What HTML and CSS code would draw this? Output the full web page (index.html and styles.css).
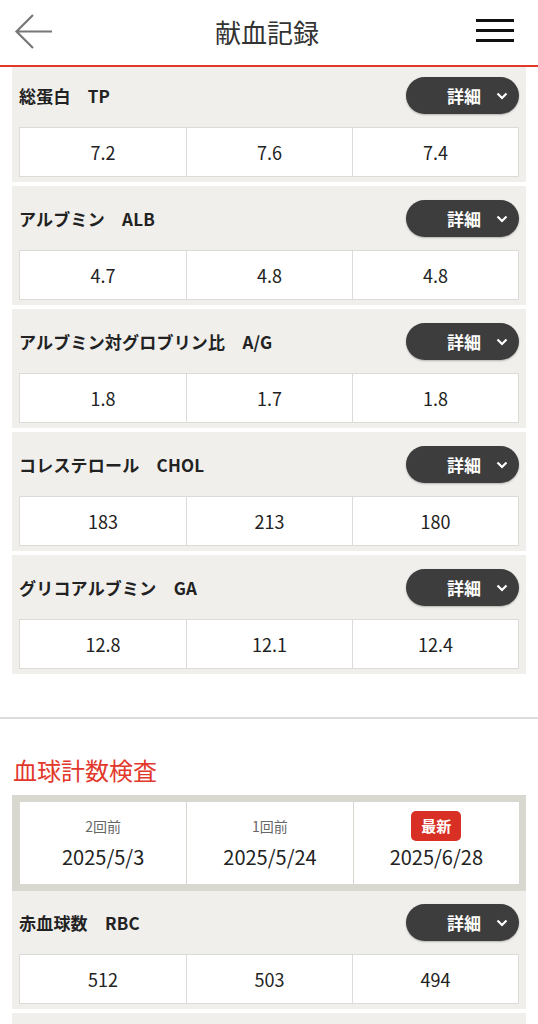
FILE: index.html
```html
<!DOCTYPE html>
<html lang="ja">
<head>
<meta charset="utf-8">
<title>献血記録</title>
<link rel="stylesheet" href="styles.css">
</head>
<body>
<header class="topbar">
  <button class="icon-btn back" aria-label="戻る">
    <svg width="40" height="38" viewBox="0 0 40 38"><path d="M38 18.5H2.5M19 2L2.5 18.5L19 35" fill="none" stroke="#777" stroke-width="2.2"/></svg>
  </button>
  <h1 class="title">献血記録</h1>
  <button class="icon-btn menu" aria-label="メニュー">
    <svg width="40" height="26" viewBox="0 0 40 26"><path d="M1 2.5H39M1 12.5H39M1 22.5H39" stroke="#111" stroke-width="3"/></svg>
  </button>
</header>

<main class="content">
  <section class="card">
    <div class="card-head"><span class="label">総蛋白　TP</span><button class="detail">詳細<svg class="chev" viewBox="0 0 12 8"><path d="M1.5 1.5L6 6L10.5 1.5" fill="none" stroke="#fff" stroke-width="2.2"/></svg></button></div>
    <div class="values"><div>7.2</div><div>7.6</div><div>7.4</div></div>
  </section>
  <section class="card">
    <div class="card-head"><span class="label">アルブミン　ALB</span><button class="detail">詳細<svg class="chev" viewBox="0 0 12 8"><path d="M1.5 1.5L6 6L10.5 1.5" fill="none" stroke="#fff" stroke-width="2.2"/></svg></button></div>
    <div class="values"><div>4.7</div><div>4.8</div><div>4.8</div></div>
  </section>
  <section class="card">
    <div class="card-head"><span class="label">アルブミン対グロブリン比　A/G</span><button class="detail">詳細<svg class="chev" viewBox="0 0 12 8"><path d="M1.5 1.5L6 6L10.5 1.5" fill="none" stroke="#fff" stroke-width="2.2"/></svg></button></div>
    <div class="values"><div>1.8</div><div>1.7</div><div>1.8</div></div>
  </section>
  <section class="card">
    <div class="card-head"><span class="label">コレステロール　CHOL</span><button class="detail">詳細<svg class="chev" viewBox="0 0 12 8"><path d="M1.5 1.5L6 6L10.5 1.5" fill="none" stroke="#fff" stroke-width="2.2"/></svg></button></div>
    <div class="values"><div>183</div><div>213</div><div>180</div></div>
  </section>
  <section class="card">
    <div class="card-head"><span class="label">グリコアルブミン　GA</span><button class="detail">詳細<svg class="chev" viewBox="0 0 12 8"><path d="M1.5 1.5L6 6L10.5 1.5" fill="none" stroke="#fff" stroke-width="2.2"/></svg></button></div>
    <div class="values"><div>12.8</div><div>12.1</div><div>12.4</div></div>
  </section>

  <hr class="divider">

  <h2 class="section-title">血球計数検査</h2>

  <div class="dates">
    <div class="date-cell"><span class="ago">2回前</span><span class="date">2025/5/3</span></div>
    <div class="date-cell"><span class="ago">1回前</span><span class="date">2025/5/24</span></div>
    <div class="date-cell"><span class="badge">最新</span><span class="date">2025/6/28</span></div>
  </div>

  <section class="card card-first">
    <div class="card-head"><span class="label">赤血球数　RBC</span><button class="detail">詳細<svg class="chev" viewBox="0 0 12 8"><path d="M1.5 1.5L6 6L10.5 1.5" fill="none" stroke="#fff" stroke-width="2.2"/></svg></button></div>
    <div class="values"><div>512</div><div>503</div><div>494</div></div>
  </section>
  <section class="card card-peek"></section>
</main>
</body>
</html>
```

FILE: styles.css
```css
* { box-sizing: border-box; }

html, body {
  margin: 0;
  padding: 0;
  background: #fff;
  font-family: "Noto Sans CJK JP", "Noto Sans", sans-serif;
  color: #222;
}

.topbar {
  position: fixed;
  top: 0;
  left: 0;
  right: 0;
  height: 67px;
  background: #fff;
  border-bottom: 2px solid #e2382c;
  display: flex;
  align-items: center;
  justify-content: space-between;
  padding: 0 23px 2px 14px;
  z-index: 10;
}

.icon-btn {
  border: 0;
  background: none;
  padding: 0;
  display: flex;
  align-items: center;
}

.menu { margin-top: -1px; }

.title {
  margin: 0 0 0 5px;
  font-size: 26px;
  font-weight: 400;
  color: #333;
}

.content {
  padding: 63px 12px 0 12px;
  display: flex;
  flex-direction: column;
}

.card {
  background: #f0efec;
  padding: 14px 7px 5px 7px;
  margin-bottom: 4px;
}

.card-head {
  display: flex;
  align-items: center;
  justify-content: space-between;
  height: 37px;
  margin-bottom: 13px;
}

.label {
  font-size: 17px;
  font-weight: 700;
  color: #222;
  letter-spacing: 0.2px;
}

.detail {
  width: 113px;
  height: 37px;
  border: 0;
  border-radius: 19px;
  background: #3d3d3d;
  color: #fff;
  font-family: inherit;
  font-size: 17px;
  font-weight: 700;
  display: flex;
  align-items: center;
  justify-content: flex-end;
  padding: 0 11px 0 0;
  box-shadow: 0 1px 2px rgba(0,0,0,0.25);
}

.chev {
  width: 12px;
  height: 8px;
  margin-left: 15px;
}

.values {
  display: grid;
  grid-template-columns: 1fr 1fr 1fr;
  background: #fff;
  border: 1px solid #dcdbd7;
}

.values div {
  height: 48px;
  display: flex;
  align-items: center;
  justify-content: center;
  font-size: 18px;
  color: #222;
}

.values div + div {
  border-left: 1px solid #dcdbd7;
}

.divider {
  border: 0;
  border-top: 2px solid #dcdcdc;
  margin: 39px -12px 0 -12px;
}

.section-title {
  margin: 35px 0 9px 1px;
  font-size: 24px;
  font-weight: 400;
  color: #e2382c;
  line-height: 32px;
}

.dates {
  background: #d8d8d0;
  padding: 7px 7px 7px 8px;
  display: grid;
  grid-template-columns: 1fr 1fr 1fr;
}

.date-cell {
  background: #fff;
  height: 82px;
  display: flex;
  flex-direction: column;
  align-items: center;
  justify-content: center;
}

.date-cell + .date-cell {
  border-left: 1px solid #d8d8d0;
}

.ago {
  font-size: 14px;
  color: #666;
  height: 30px;
  line-height: 30px;
  margin-top: -4px;
}

.badge {
  background: #d93025;
  color: #fff;
  font-size: 15px;
  font-weight: 700;
  width: 50px;
  height: 30px;
  line-height: 30px;
  text-align: center;
  border-radius: 5px;
  margin-top: -4px;
}

.date {
  font-size: 20px;
  color: #222;
  line-height: 28px;
  margin-top: 2px;
}

.card-first {
  padding-top: 13px;
}

.card-peek {
  height: 40px;
}
```
